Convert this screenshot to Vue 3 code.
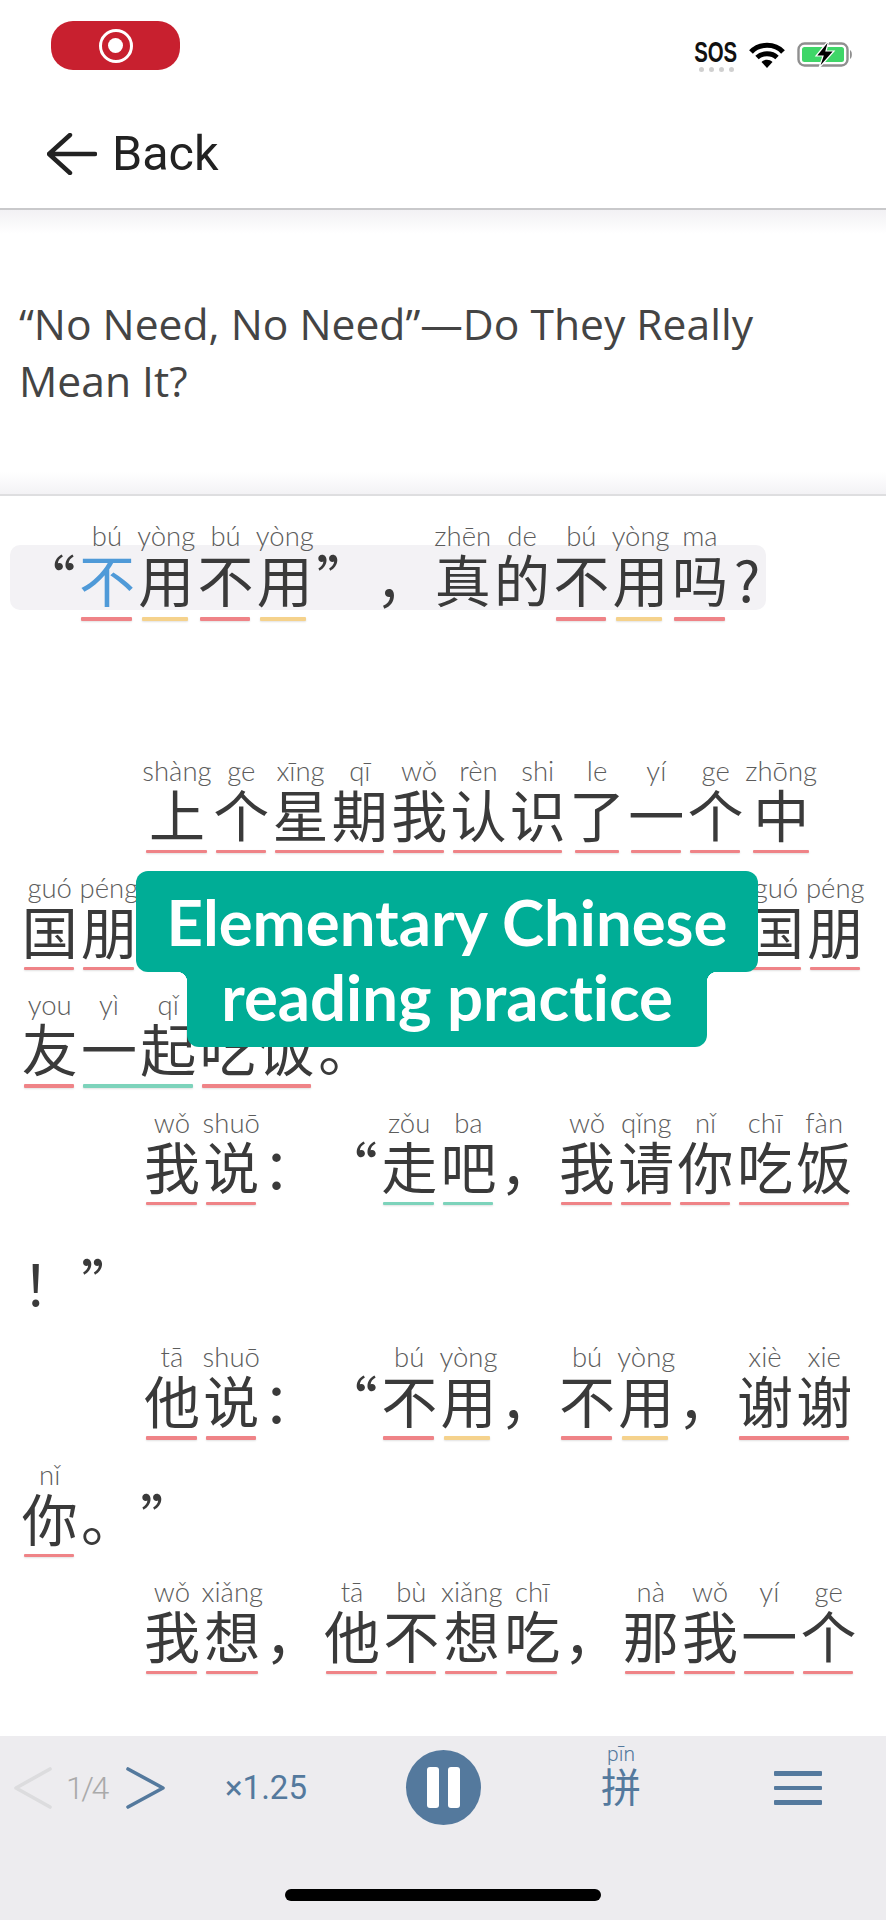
<script setup>
// w(): a word with its pinyin and underline colour, p(): plain punctuation
const w = (text, pinyin, tone, extra = {}) => ({
  tone,
  ...extra,
  chars: text.split('').map((h, i) => ({ h, py: pinyin.split(' ')[i] }))
});
const p = (text) => ({ chars: [{ h: text, py: '' }] });

const titleRow = [
  p('“'), w('不', 'bú', 'red', { active: true }), w('用', 'yòng', 'yellow'), w('不', 'bú', 'red'), w('用', 'yòng', 'yellow'),
  p('”'), p('，'), w('真', 'zhēn'), w('的', 'de'), w('不', 'bú', 'red'), w('用', 'yòng', 'yellow'), w('吗', 'ma', 'red'), p('?')
];

const rows = [
  { indent: true, items: [w('上', 'shàng', 'red'), w('个', 'ge', 'red'), w('星期', 'xīng qī', 'red'), w('我', 'wǒ', 'red'), w('认识', 'rèn shi', 'red'), w('了', 'le', 'red', { narrow: true }), w('一', 'yí', 'red'), w('个', 'ge', 'red'), w('中', 'zhōng', 'red', { narrow: true })] },
  { items: [w('国', 'guó', 'red'), w('朋', 'péng', 'red'), w('友', 'you', 'red'), p('。'), w('今天', 'jīn tiān', 'red'), w('我', 'wǒ', 'red'), w('想', 'xiǎng', 'red'), w('和', 'hé', 'red'), w('这', 'zhè', 'red'), w('个', 'ge', 'red'), w('中', 'zhōng', 'red'), w('国', 'guó', 'red'), w('朋', 'péng', 'red')] },
  { items: [w('友', 'you', 'red'), w('一起', 'yì qǐ', 'green'), w('吃饭', 'chī fàn', 'red'), p('。')] },
  { indent: true, items: [w('我', 'wǒ', 'red'), w('说', 'shuō', 'red'), p('：'), p('“'), w('走', 'zǒu', 'green'), w('吧', 'ba', 'green'), p('，'), w('我', 'wǒ', 'red'), w('请', 'qǐng', 'red'), w('你', 'nǐ', 'red'), w('吃饭', 'chī fàn', 'red')] },
  { items: [p('！'), p('”')] },
  { indent: true, items: [w('他', 'tā', 'red'), w('说', 'shuō', 'red'), p('：'), p('“'), w('不', 'bú', 'red'), w('用', 'yòng', 'yellow'), p('，'), w('不', 'bú', 'red'), w('用', 'yòng', 'yellow'), p('，'), w('谢谢', 'xiè xie', 'red')] },
  { items: [w('你', 'nǐ', 'red'), p('。'), p('”')] },
  { indent: true, items: [w('我', 'wǒ', 'red'), w('想', 'xiǎng', 'red'), p('，'), w('他', 'tā', 'red'), w('不', 'bù', 'red'), w('想', 'xiǎng', 'red'), w('吃', 'chī', 'red'), p('，'), w('那', 'nà', 'red'), w('我', 'wǒ', 'red'), w('一', 'yí', 'red'), w('个', 'ge', 'red')] }
];
</script>

<template>
  <div class="page">
    <div class="status">
      <div class="rec"><span class="rec-ring"><span class="rec-dot"></span></span></div>
      <div class="status-right">
        <div class="sos">
          <span class="sos-text">SOS</span>
          <span class="sos-dots"><i></i><i></i><i></i><i></i></span>
        </div>
        <svg class="wifi" width="36" height="26" viewBox="0 0 36 26">
          <path d="M2 10 C10 1 26 1 34 10" fill="none" stroke="#000" stroke-width="5" />
          <path d="M8 15.5 C13 10.5 23 10.5 28 15.5" fill="none" stroke="#000" stroke-width="4.8" />
          <path d="M12.5 20 C15.5 17 20.5 17 23.5 20 L18 26 Z" fill="#000" />
        </svg>
        <svg class="battery" width="58" height="28" viewBox="0 0 58 28">
          <rect x="1.5" y="3.5" width="49" height="22" rx="6" fill="#fff" stroke="#8f8f8f" stroke-width="2.4" />
          <rect x="5" y="7" width="42" height="15" rx="2.5" fill="#3fd668" />
          <path d="M53 10 C55.5 11 55.5 18 53 19 Z" fill="#8f8f8f" />
          <path d="M32 0 L19 16 L26 16 L22 28 L37 11 L29 11 Z" fill="#000" stroke="#fff" stroke-width="1.2" />
        </svg>
      </div>
    </div>

    <div class="nav">
      <svg width="50" height="42" viewBox="0 0 50 42">
        <path d="M48 21 H3 M23 2 L2 21 L23 40" fill="none" stroke="#222" stroke-width="4.4" stroke-linecap="round" stroke-linejoin="round" />
      </svg>
      <span class="back">Back</span>
    </div>

    <div class="title-box">
      <div class="title">“No Need, No Need”—Do They Really Mean It?</div>
    </div>

    <div class="reader">
      <div class="row title-row">
        <div v-for="(item, i) in titleRow" :key="i" class="word">
          <div class="chars">
            <div v-for="(c, j) in item.chars" :key="j" class="cell" :class="{ narrowq: c.h === '?' }">
              <span class="py">{{ c.py }}</span>
              <span class="hz" :class="{ active: item.active }">{{ c.h }}</span>
            </div>
          </div>
          <div v-if="item.tone" class="line" :class="[item.tone, { narrow: item.narrow }]"></div>
        </div>
      </div>

      <div v-for="(row, r) in rows" :key="r" class="row" :class="{ indent: row.indent }">
        <div v-for="(item, i) in row.items" :key="i" class="word">
          <div class="chars">
            <div v-for="(c, j) in item.chars" :key="j" class="cell">
              <span class="py">{{ c.py }}</span>
              <span class="hz">{{ c.h }}</span>
            </div>
          </div>
          <div v-if="item.tone" class="line" :class="[item.tone, { narrow: item.narrow }]"></div>
        </div>
      </div>
    </div>

    <div class="toolbar">
      <div class="controls">
        <svg class="prev" width="42" height="42" viewBox="0 0 42 42">
          <path d="M38 2 L4 21 L38 40" fill="none" stroke="#dcdcde" stroke-width="3.6" stroke-linecap="round" stroke-linejoin="round" />
        </svg>
        <span class="pages">1/4</span>
        <svg class="next" width="42" height="42" viewBox="0 0 42 42">
          <path d="M3 2 L38 21 L3 40" fill="none" stroke="#54799d" stroke-width="3.6" stroke-linecap="round" stroke-linejoin="round" />
        </svg>
        <span class="speed">×1.25</span>
        <div class="pause"><i></i><i></i></div>
        <div class="pin">
          <span class="pin-py">pīn</span>
          <span class="pin-hz">拼</span>
        </div>
        <div class="menu"><i></i><i></i><i></i></div>
      </div>
      <div class="home"></div>
    </div>

    <div class="banner">
      <div class="banner-line first">Elementary Chinese</div>
      <div class="banner-line second">reading practice</div>
    </div>
  </div>
</template>

<style scoped>
.page {
  position: relative;
  width: 886px;
  height: 1920px;
  overflow: hidden;
  background: #fff;
  display: flex;
  flex-direction: column;
  font-family: "Noto Sans CJK SC", sans-serif;
}

.status {
  height: 90px;
  flex: none;
  display: flex;
  justify-content: space-between;
  padding: 21px 31px 0 51px;
  box-sizing: border-box;
}
.rec {
  width: 129px;
  height: 49px;
  border-radius: 22px;
  background: #c8202f;
  display: flex;
  align-items: center;
  justify-content: center;
}
.rec-ring {
  width: 34px;
  height: 34px;
  box-sizing: border-box;
  border: 3px solid #fff;
  border-radius: 50%;
  display: flex;
  align-items: center;
  justify-content: center;
}
.rec-dot {
  width: 15px;
  height: 15px;
  border-radius: 50%;
  background: #fff;
}
.status-right {
  display: flex;
  align-items: flex-start;
  padding-top: 18px;
}
.sos {
  width: 44px;
  display: flex;
  flex-direction: column;
  align-items: center;
  margin-right: 11px;
}
.sos-text {
  font-family: "Liberation Sans", sans-serif;
  font-weight: 700;
  font-size: 30px;
  line-height: 25px;
  color: #111;
  transform: scaleX(0.68);
}
.sos-dots {
  display: flex;
  gap: 5px;
  margin-top: 3px;
}
.sos-dots i {
  width: 5px;
  height: 5px;
  border-radius: 50%;
  background: #cfcfcf;
}
.wifi {
  margin-top: 3px;
  margin-right: 12px;
}
.battery {
  margin-top: 1px;
}

.nav {
  flex: none;
  display: flex;
  align-items: center;
  padding: 10px 0 0 47px;
  gap: 15px;
  border-bottom: 2px solid #c9c9cb;
  box-sizing: border-box;
  height: 120px;
}
.back {
  font-family: Roboto, sans-serif;
  font-size: 48.5px;
  color: #222;
  position: relative;
  top: -1px;
}

.title-box {
  height: 286px;
  flex: none;
  box-sizing: border-box;
  padding: 85px 60px 0 19px;
  border-bottom: 2px solid #dedee0;
  background: linear-gradient(#f2f1f4, #fff 24px, #fff 262px, #f3f2f5);
}
.title {
  font-family: "Open Sans", sans-serif;
  font-size: 42.6px;
  line-height: 57px;
  color: #444;
  font-weight: 400;
}

.reader {
  flex: 1;
  min-height: 0;
  padding-top: 25px;
  overflow: hidden;
}
.row {
  position: relative;
  display: flex;
  align-items: flex-start;
  height: 117.33px;
  padding-left: 20px;
  box-sizing: border-box;
}
.row.indent {
  padding-left: 142.3px;
}
.title-row {
  padding-left: 18px;
  margin-bottom: 117.33px;
}
.title-row::before {
  content: "";
  position: absolute;
  left: 10px;
  top: 24px;
  width: 756px;
  height: 65px;
  background: #f3f2f5;
  border-radius: 10px;
}
.word {
  position: relative;
  flex: none;
}
.chars {
  display: flex;
}
.cell {
  display: flex;
  flex-direction: column;
  align-items: center;
  min-width: 59.3px;
}
.cell.narrowq {
  min-width: 35px;
  width: 35px;
}
.py {
  font-family: Lato, sans-serif;
  font-weight: 300;
  font-size: 27.5px;
  height: 30px;
  line-height: 30px;
  margin-bottom: -3px;
  color: #5c5c5c;
  white-space: nowrap;
}
.hz {
  font-size: 56px;
  line-height: 60px;
  height: 60px;
  color: #3a3a3a;
  font-weight: 400;
  white-space: nowrap;
}
.hz.active {
  color: #4f9ad8;
}
.line {
  height: 3.5px;
  margin: 7px 5px 0 4px;
  border-radius: 1px;
  box-shadow: 0 1px 2px rgba(0, 0, 0, 0.12);
}
.title-row .line {
  margin-top: 9px;
}
.line.red {
  background: #ef8387;
}
.line.yellow {
  background: #f5d28c;
  margin-left: 5px;
  margin-right: 8px;
}
.line.green {
  background: #7dd3bb;
}
.line.narrow {
  margin-left: 8px;
  margin-right: 8px;
}

.toolbar {
  height: 184px;
  flex: none;
  background: #edecef;
  display: flex;
  flex-direction: column;
  align-items: center;
}
.controls {
  align-self: stretch;
  height: 153px;
  display: flex;
  align-items: flex-start;
  padding-top: 14px;
  box-sizing: border-box;
}
.prev {
  margin: 17px 0 0 12px;
}
.pages {
  font-family: Roboto, sans-serif;
  font-weight: 300;
  font-size: 32px;
  line-height: 40px;
  letter-spacing: -2.5px;
  color: #aaa;
  margin: 18px 0 0 12px;
  width: 45px;
}
.next {
  margin: 17px 0 0 14px;
}
.speed {
  font-family: Roboto, sans-serif;
  font-weight: 400;
  font-size: 33px;
  line-height: 40px;
  color: #54799d;
  margin: 18px 0 0 58px;
  width: 82px;
}
.pause {
  width: 75px;
  height: 75px;
  border-radius: 50%;
  background: #54799d;
  margin-left: 99px;
  display: flex;
  align-items: center;
  justify-content: center;
  gap: 9px;
}
.pause i {
  width: 12px;
  height: 41px;
  border-radius: 3px;
  background: #fff;
}
.pin {
  display: flex;
  flex-direction: column;
  align-items: center;
  width: 40px;
  margin-left: 120px;
  margin-top: -6px;
}
.pin-py {
  font-family: Roboto, sans-serif;
  font-weight: 300;
  font-size: 21px;
  line-height: 20px;
  color: #54799d;
}
.pin-hz {
  font-size: 40px;
  line-height: 42px;
  color: #54799d;
  font-weight: 400;
}
.menu {
  margin: 21px 0 0 133px;
  width: 48px;
  display: flex;
  flex-direction: column;
  gap: 10px;
}
.menu i {
  height: 4.5px;
  border-radius: 1px;
  background: #54799d;
}
.home {
  width: 316px;
  height: 12px;
  border-radius: 6px;
  background: #000;
}

.banner {
  position: absolute;
  left: 136px;
  top: 871px;
  width: 622px;
  display: flex;
  flex-direction: column;
  align-items: center;
  font-family: Lato, sans-serif;
  font-weight: 700;
  color: #fff;
  font-size: 63.5px;
  font-variant-ligatures: none;
  text-align: center;
}
.banner-line {
  background: #00ad96;
  box-sizing: border-box;
  position: relative;
}
.banner-line.first {
  width: 622px;
  height: 101px;
  line-height: 101px;
  border-radius: 12px;
}
.banner-line.second {
  width: 520px;
  height: 75px;
  line-height: 50px;
  border-radius: 0 0 12px 12px;
}
.banner-line.second::before,
.banner-line.second::after {
  content: "";
  position: absolute;
  top: 0;
  width: 10px;
  height: 10px;
}
.banner-line.second::before {
  left: -10px;
  background: radial-gradient(circle at 0 100%, transparent 10px, #00ad96 10.5px);
}
.banner-line.second::after {
  right: -10px;
  background: radial-gradient(circle at 100% 100%, transparent 10px, #00ad96 10.5px);
}
</style>
